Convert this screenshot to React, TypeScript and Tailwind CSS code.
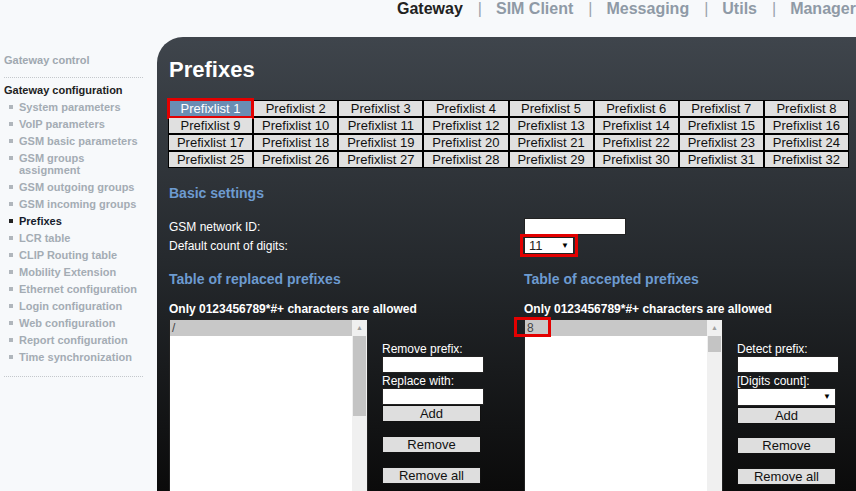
import React from 'react';

const navItems = ['Gateway', 'SIM Client', 'Messaging', 'Utils', 'Manager'];

const menuItems = [
  'System parameters',
  'VoIP parameters',
  'GSM basic parameters',
  'GSM groups assignment',
  'GSM outgoing groups',
  'GSM incoming groups',
  'Prefixes',
  'LCR table',
  'CLIP Routing table',
  'Mobility Extension',
  'Ethernet configuration',
  'Login configuration',
  'Web configuration',
  'Report configuration',
  'Time synchronization',
];

const prefixlists = Array.from({ length: 32 }, (_, i) => i + 1);

function TextInput({ className = '' }: { className?: string }) {
  return <div className={`h-[17px] bg-white border border-[#222] ${className}`} />;
}

function Button({ label }: { label: string }) {
  return (
    <div className="h-[17px] w-[99px] bg-[#dedede] border border-[#111] text-[13px] leading-[15px] text-center text-[#111]">
      {label}
    </div>
  );
}

function ListBox({ value, longThumb, marked }: { value: string; longThumb?: boolean; marked?: boolean }) {
  return (
    <div className="relative w-[199px] h-[175px] bg-white border border-[#222] flex">
      <div className="flex-1">
        <div className="h-[16px] bg-[#c8c8c8] text-[12px] leading-[16px] pl-[2px] text-[#444]">{value}</div>
      </div>
      <div className="w-[15px] bg-[#f0f0f0] flex flex-col items-center">
        <div className="h-[16px] flex items-center justify-center text-[7px] text-[#a0a0a0]">▲</div>
        <div className={`w-[13px] bg-[#c4c4c4] ${longThumb ? 'h-[80px]' : 'h-[16px]'}`} />
      </div>
      {marked && (
        <div className="absolute left-[-11px] top-[-3px] w-[37px] h-[20px] border-[3px] border-[#e30000]" />
      )}
    </div>
  );
}

export default function App() {
  return (
    <div
      className="w-[856px] h-[491px] overflow-hidden bg-[#f7f9fb] flex flex-col"
      style={{ fontFamily: '"Liberation Sans", Arial, sans-serif' }}
    >
      {/* top navigation */}
      <div className="h-[37px] shrink-0 flex items-start pl-[397px]">
        {navItems.map((item, i) => (
          <React.Fragment key={item}>
            {i > 0 && <span className="pl-[15px] pr-[14px] text-[16px] leading-[17px] text-[#9aa3ad]">|</span>}
            <span
              className={`text-[16px] leading-[17px] font-bold whitespace-nowrap ${
                i === 0 ? 'text-[#222]' : 'text-[#8f9aa6]'
              }`}
            >
              {item}
            </span>
          </React.Fragment>
        ))}
      </div>

      <div className="flex flex-1 min-h-0">
        {/* sidebar */}
        <div className="w-[157px] shrink-0 pl-[4px] pr-[14px] pt-[17px]">
          <div className="text-[11px] leading-[13px] font-bold text-[#a0a8b0]">Gateway control</div>
          <div className="mt-[10px] border-t border-dotted border-[#c4c8cc]" />
          <div className="mt-[6px] text-[11px] leading-[13px] font-bold text-[#222]">Gateway configuration</div>
          <ul className="mt-[4px]">
            {menuItems.map((item) => {
              const active = item === 'Prefixes';
              return (
                <li key={item} className="flex items-start pl-[5px] pb-[5px]">
                  <span
                    className={`mt-[4px] w-[4px] h-[4px] shrink-0 ${active ? 'bg-[#222]' : 'bg-[#b0b6bc]'}`}
                  />
                  <span
                    className={`ml-[6px] text-[11px] leading-[12px] font-bold ${
                      active ? 'text-[#151b2b]' : 'text-[#a4acb4]'
                    }`}
                  >
                    {item === 'GSM groups assignment' ? (
                      <>
                        GSM groups
                        <br />
                        assignment
                      </>
                    ) : (
                      item
                    )}
                  </span>
                </li>
              );
            })}
          </ul>
          <div className="mt-[8px] border-t border-dotted border-[#c4c8cc]" />
        </div>

        {/* main panel */}
        <div className="flex-1 rounded-tl-[26px] bg-gradient-to-b from-[#3f454c] via-[#25292d] to-[#0b0b0b] pl-[12px] pr-[7px] pt-[20px]">
          <h1 className="text-[22px] leading-[26px] font-bold text-white">Prefixes</h1>

          <div className="mt-[17px] -ml-[1px] grid grid-cols-8 gap-[2px] bg-black p-[1px]">
            {prefixlists.map((n) => (
              <div
                key={n}
                className={`relative h-[15px] text-[13px] leading-[15px] text-center whitespace-nowrap ${
                  n === 1 ? 'bg-[#6a8db3] text-white' : 'bg-[#e0e0e0] text-[#111]'
                }`}
              >
                Prefixlist {n}
                {n === 1 && (
                  <div className="absolute left-[-2px] right-[-2px] top-[-3px] bottom-[-3px] border-[3px] border-[#e30000]" />
                )}
              </div>
            ))}
          </div>

          <div className="mt-[17px] text-[14px] leading-[16px] font-bold text-[#6d9bd0]">Basic settings</div>

          <div className="mt-[17px] flex flex-col gap-[2px]">
            <div className="flex items-center h-[17px]">
              <span className="w-[355px] text-[12px] text-white">GSM network ID:</span>
              <TextInput className="w-[102px]" />
            </div>
            <div className="flex items-center h-[17px]">
              <span className="w-[355px] text-[12px] text-white">Default count of digits:</span>
              <div className="relative w-[50px] h-[17px] bg-white border border-[#222] flex items-center justify-between px-[4px]">
                <span className="text-[13px] text-[#222]">11</span>
                <span className="text-[8px] text-black">▼</span>
                <div className="absolute left-[-5px] right-[-5px] top-[-4px] bottom-[-4px] border-[3px] border-[#e30000]" />
              </div>
            </div>
          </div>

          <div className="mt-[17px] flex">
            {/* replaced prefixes */}
            <div className="w-[355px] shrink-0">
              <div className="text-[14px] leading-[16px] font-bold text-[#6d9bd0]">Table of replaced prefixes</div>
              <div className="mt-[15px] text-[12px] leading-[14px] font-bold text-white">
                Only 0123456789*#+ characters are allowed
              </div>
              <div className="mt-[3px] flex">
                <ListBox value="/" longThumb />
                <div className="ml-[14px] pt-[23px] flex flex-col w-[102px]">
                  <span className="text-[12px] leading-[14px] text-white">Remove prefix:</span>
                  <TextInput className="w-[102px]" />
                  <span className="mt-[1px] text-[12px] leading-[14px] text-white">Replace with:</span>
                  <TextInput className="w-[102px]" />
                  <Button label="Add" />
                  <div className="mt-[14px]">
                    <Button label="Remove" />
                  </div>
                  <div className="mt-[14px]">
                    <Button label="Remove all" />
                  </div>
                </div>
              </div>
            </div>

            {/* accepted prefixes */}
            <div className="flex-1">
              <div className="text-[14px] leading-[16px] font-bold text-[#6d9bd0]">Table of accepted prefixes</div>
              <div className="mt-[15px] text-[12px] leading-[14px] font-bold text-white">
                Only 0123456789*#+ characters are allowed
              </div>
              <div className="mt-[3px] flex">
                <ListBox value="8" marked />
                <div className="ml-[14px] pt-[23px] flex flex-col w-[102px]">
                  <span className="text-[12px] leading-[14px] text-white">Detect prefix:</span>
                  <TextInput className="w-[102px]" />
                  <span className="mt-[1px] text-[12px] leading-[14px] text-white">[Digits count]:</span>
                  <div className="w-[99px] h-[18px] bg-white border border-[#222] flex items-center justify-end pr-[4px]">
                    <span className="text-[8px] text-black">▼</span>
                  </div>
                  <div className="mt-[1px]">
                    <Button label="Add" />
                  </div>
                  <div className="mt-[13px]">
                    <Button label="Remove" />
                  </div>
                  <div className="mt-[14px]">
                    <Button label="Remove all" />
                  </div>
                </div>
              </div>
            </div>
          </div>
        </div>
      </div>
    </div>
  );
}
